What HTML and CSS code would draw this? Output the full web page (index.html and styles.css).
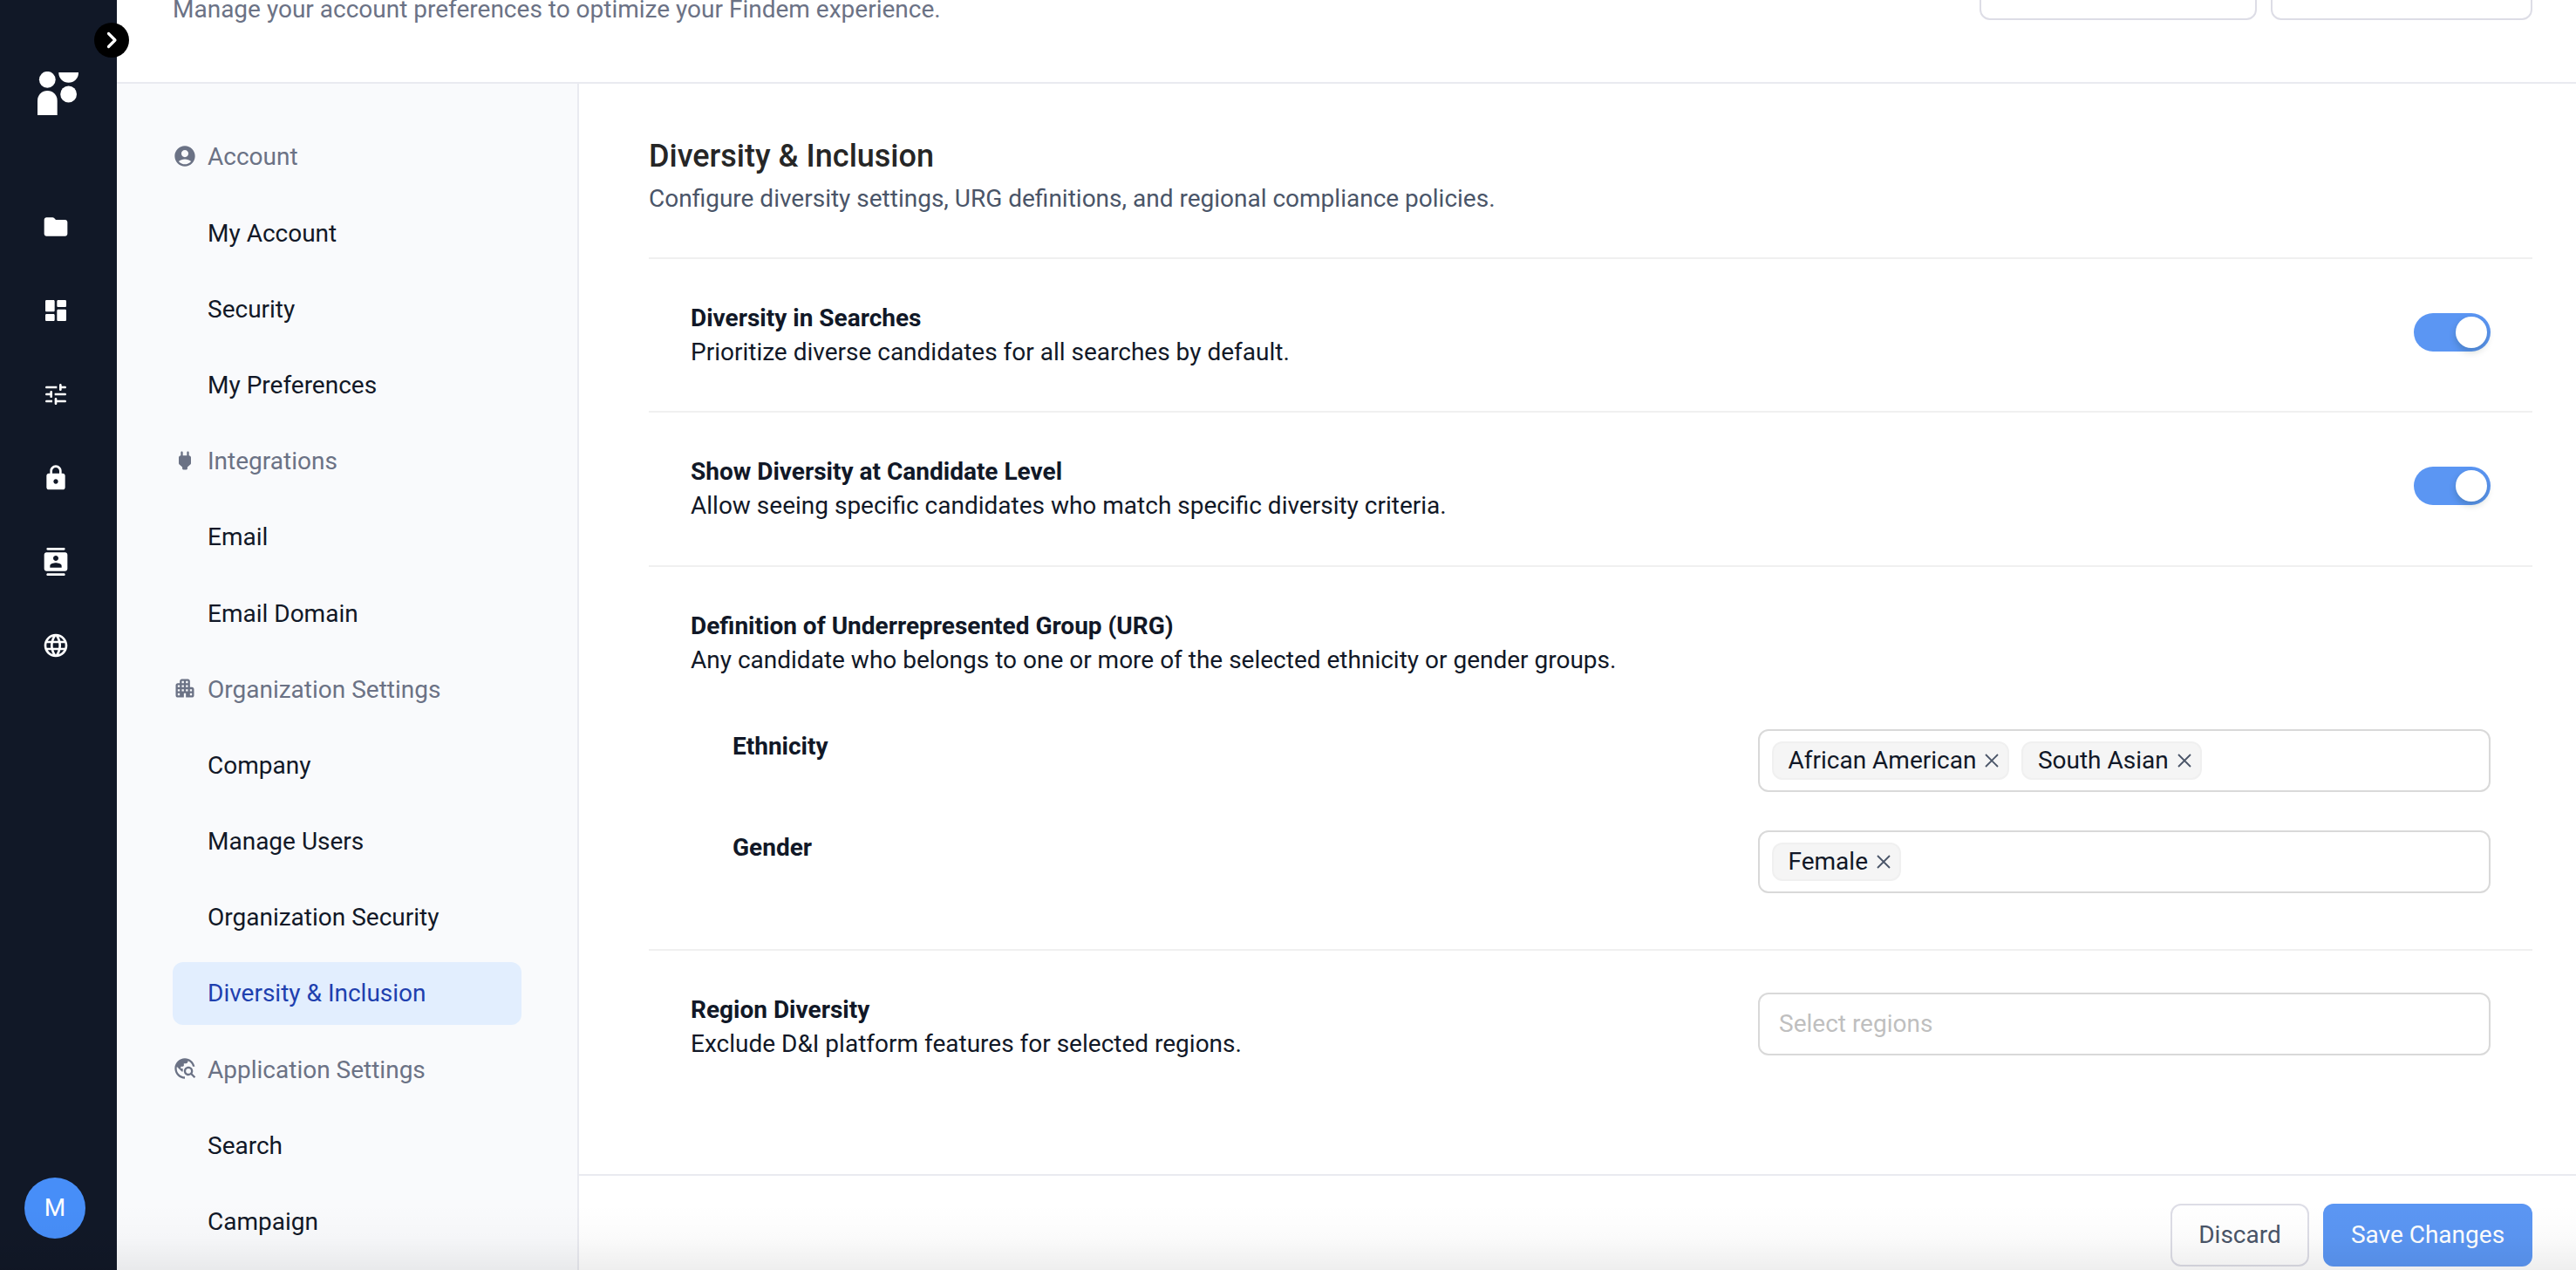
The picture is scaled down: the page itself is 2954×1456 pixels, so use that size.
FILE: index.html
```html
<!DOCTYPE html>
<html lang="en">
<head>
<meta charset="utf-8">
<title>Settings</title>
<link rel="stylesheet" href="styles.css">
</head>
<body>
<div class="app">
  <aside class="rail">
    <button class="rail-toggle" aria-label="Expand">
      <svg viewBox="0 0 20 20" width="20" height="20"><path d="M6.500 2.500L14 10l-7.500 7.500" fill="none" stroke="#fff" stroke-width="3.200" stroke-linecap="round" stroke-linejoin="round"/></svg>
    </button>
    <svg class="logo" viewBox="0 0 48 50" width="48" height="50" fill="#fff"><circle cx="11.300" cy="9.300" r="9.400"/><path d="M24.300 1h22.700v.5a11.350 11.350 0 0 1-22.700 0z"/><circle cx="35.600" cy="26" r="9.400"/><path d="M0 50V33.400a11.350 11.350 0 0 1 22.700 0V50z"/></svg>
    <nav class="rail-nav">
      <svg class="rail-icon" viewBox="0 0 24 24"><path d="M10.590 4.590C10.210 4.210 9.700 4 9.170 4H4c-1.100 0-1.990.9-1.990 2L2 18c0 1.100.9 2 2 2h16c1.100 0 2-.9 2-2V8c0-1.100-.9-2-2-2h-8l-1.410-1.410z"/></svg>
      <svg class="rail-icon" viewBox="0 0 24 24"><path d="M4 13h6c.55 0 1-.45 1-1V4c0-.55-.45-1-1-1H4c-.55 0-1 .45-1 1v8c0 .55.45 1 1 1zm0 8h6c.55 0 1-.45 1-1v-4c0-.55-.45-1-1-1H4c-.55 0-1 .45-1 1v4c0 .55.45 1 1 1zm10 0h6c.55 0 1-.45 1-1v-8c0-.55-.45-1-1-1h-6c-.55 0-1 .45-1 1v8c0 .55.45 1 1 1zM13 4v4c0 .55.45 1 1 1h6c.55 0 1-.45 1-1V4c0-.55-.45-1-1-1h-6c-.55 0-1 .45-1 1z"/></svg>
      <svg class="rail-icon" viewBox="0 0 24 24"><path d="M3 18c0 .55.45 1 1 1h5v-2H4c-.55 0-1 .45-1 1zM3 6c0 .55.45 1 1 1h9V5H4c-.55 0-1 .45-1 1zm10 14v-1h7c.55 0 1-.45 1-1s-.45-1-1-1h-7v-1c0-.55-.45-1-1-1s-1 .45-1 1v4c0 .55.45 1 1 1s1-.45 1-1zM7 10v1H4c-.55 0-1 .45-1 1s.45 1 1 1h3v1c0 .55.45 1 1 1s1-.45 1-1v-4c0-.55-.45-1-1-1s-1 .45-1 1zm14 2c0-.55-.45-1-1-1h-9v2h9c.55 0 1-.45 1-1zm-5-3c.55 0 1-.45 1-1V7h3c.55 0 1-.45 1-1s-.45-1-1-1h-3V4c0-.55-.45-1-1-1s-1 .45-1 1v4c0 .55.45 1 1 1z"/></svg>
      <svg class="rail-icon" viewBox="0 0 24 24"><path d="M18 8h-1V6c0-2.760-2.240-5-5-5S7 3.240 7 6v2H6c-1.100 0-2 .9-2 2v10c0 1.100.9 2 2 2h12c1.100 0 2-.9 2-2V10c0-1.100-.9-2-2-2zm-6 9c-1.100 0-2-.9-2-2s.9-2 2-2 2 .9 2 2-.9 2-2 2zM9 8V6c0-1.660 1.340-3 3-3s3 1.340 3 3v2H9z"/></svg>
      <svg class="rail-icon" viewBox="0 0 24 24"><path d="M20 4H4c-1.100 0-2 .9-2 2v12c0 1.100.9 2 2 2h16c1.100 0 2-.9 2-2V6c0-1.100-.9-2-2-2zm-8 2.750c1.240 0 2.250 1.010 2.250 2.250s-1.010 2.250-2.250 2.250S9.750 10.240 9.750 9 10.760 6.750 12 6.750zM17 17H7v-1.500c0-1.670 3.330-2.500 5-2.500s5 .83 5 2.500V17zM5 2h14c.55 0 1-.45 1-1s-.45-1-1-1H5c-.55 0-1 .45-1 1s.45 1 1 1zm14 20H5c-.55 0-1 .45-1 1s.45 1 1 1h14c.55 0 1-.45 1-1s-.45-1-1-1z"/></svg>
      <svg class="rail-icon" viewBox="0 0 24 24"><path d="M11.990 2C6.470 2 2 6.480 2 12s4.470 10 9.990 10C17.520 22 22 17.520 22 12S17.520 2 11.990 2zm6.930 6h-2.950c-.32-1.250-.78-2.450-1.380-3.560 1.840.63 3.370 1.910 4.330 3.560zM12 4.040c.83 1.200 1.480 2.530 1.910 3.960h-3.820c.43-1.430 1.080-2.760 1.910-3.960zM4.260 14C4.100 13.360 4 12.690 4 12s.1-1.360.26-2h3.380c-.08.66-.14 1.320-.14 2s.06 1.340.14 2H4.260zm.82 2h2.950c.32 1.250.78 2.450 1.380 3.560-1.840-.63-3.370-1.900-4.330-3.560zm2.950-8H5.080c.96-1.660 2.490-2.930 4.330-3.560C8.810 5.550 8.350 6.750 8.030 8zM12 19.960c-.83-1.200-1.480-2.530-1.910-3.960h3.820c-.43 1.430-1.080 2.760-1.910 3.960zM14.340 14H9.660c-.09-.66-.16-1.320-.16-2s.07-1.350.16-2h4.680c.09.65.16 1.320.16 2s-.07 1.340-.16 2zm.25 5.560c.6-1.110 1.060-2.310 1.380-3.560h2.950c-.96 1.650-2.490 2.930-4.330 3.560zM16.360 14c.08-.66.14-1.320.14-2s-.06-1.340-.14-2h3.380c.16.64.26 1.310.26 2s-.1 1.360-.26 2h-3.380z"/></svg>
    </nav>
    <div class="avatar">M</div>
  </aside>
  <div class="page">
    <header class="page-header">
      <p class="page-subtitle">Manage your account preferences to optimize your Findem experience.</p>
      <div class="header-actions">
        <button class="header-btn header-btn-wide"></button>
        <button class="header-btn"></button>
      </div>
    </header>
    <div class="body">
      <nav class="menu">
        <div class="menu-group"><svg class="menu-icon" viewBox="0 0 24 24"><path d="M12 2C6.480 2 2 6.480 2 12s4.480 10 10 10 10-4.480 10-10S17.520 2 12 2zm0 4c1.930 0 3.500 1.570 3.500 3.500S13.930 13 12 13s-3.500-1.570-3.500-3.500S10.070 6 12 6zm0 14c-2.030 0-4.430-.82-6.140-2.880C7.550 15.800 9.680 15 12 15s4.450.8 6.140 2.120C16.430 19.180 14.030 20 12 20z"/></svg>Account</div>
        <a class="menu-item">My Account</a>
        <a class="menu-item">Security</a>
        <a class="menu-item">My Preferences</a>
        <div class="menu-group"><svg class="menu-icon" viewBox="0 0 24 24"><path d="M16 7V4c0-.55-.45-1-1-1s-1 .45-1 1v3h-4V4c0-.55-.45-1-1-1s-1 .45-1 1v3c-1.100 0-2 .9-2 2v5.490c0 .53.21 1.040.59 1.410L9.500 18.500V20c0 .55.45 1 1 1h3c.55 0 1-.45 1-1v-1.500l2.910-2.600c.38-.37.59-.88.59-1.410V9c0-1.100-.9-2-2-2z"/></svg>Integrations</div>
        <a class="menu-item">Email</a>
        <a class="menu-item">Email Domain</a>
        <div class="menu-group"><svg class="menu-icon" viewBox="0 0 24 24"><path d="M17 11V5c0-1.100-.9-2-2-2H9c-1.100 0-2 .9-2 2v2H5c-1.100 0-2 .9-2 2v10c0 1.100.9 2 2 2h6v-4h2v4h6c1.100 0 2-.9 2-2v-6c0-1.100-.9-2-2-2h-2zM7 19H5v-2h2v2zm0-4H5v-2h2v2zm0-4H5V9h2v2zm4 4H9v-2h2v2zm0-4H9V9h2v2zm0-4H9V5h2v2zm4 8h-2v-2h2v2zm0-4h-2V9h2v2zm0-4h-2V5h2v2zm4 12h-2v-2h2v2zm0-4h-2v-2h2v2z"/></svg>Organization Settings</div>
        <a class="menu-item">Company</a>
        <a class="menu-item">Manage Users</a>
        <a class="menu-item">Organization Security</a>
        <a class="menu-item active">Diversity &amp; Inclusion</a>
        <div class="menu-group"><svg class="menu-icon" viewBox="0 0 24 24"><path d="M19.300 16.900c.4-.7.7-1.500.7-2.400 0-2.500-2-4.500-4.500-4.500S11 12 11 14.500s2 4.500 4.500 4.500c.9 0 1.700-.3 2.400-.7l3.200 3.200 1.400-1.400-3.200-3.200zm-3.800.1c-1.400 0-2.500-1.100-2.500-2.500s1.100-2.500 2.500-2.500 2.500 1.100 2.500 2.500-1.100 2.500-2.500 2.500zM12 20v2C6.480 22 2 17.520 2 12S6.480 2 12 2c4.840 0 8.870 3.440 9.800 8h-2.070c-.64-2.460-2.400-4.470-4.730-5.410V5c0 1.100-.9 2-2 2h-2v2c0 .55-.45 1-1 1H8v2h2v3H9l-4.790-4.790C4.080 10.790 4 11.380 4 12c0 4.410 3.590 8 8 8z"/></svg>Application Settings</div>
        <a class="menu-item">Search</a>
        <a class="menu-item">Campaign</a>
      </nav>
      <main class="content">
        <div class="sections">
          <div class="intro">
            <h1 class="title">Diversity &amp; Inclusion</h1>
            <p class="lead">Configure diversity settings, URG definitions, and regional compliance policies.</p>
          </div>
          <section class="setting">
            <div>
              <h2 class="label">Diversity in Searches</h2>
              <p class="text">Prioritize diverse candidates for all searches by default.</p>
            </div>
            <span class="switch"><span class="knob"></span></span>
          </section>
          <section class="setting">
            <div>
              <h2 class="label">Show Diversity at Candidate Level</h2>
              <p class="text">Allow seeing specific candidates who match specific diversity criteria.</p>
            </div>
            <span class="switch"><span class="knob"></span></span>
          </section>
          <section class="setting setting-group">
            <div>
              <h2 class="label">Definition of Underrepresented Group (URG)</h2>
              <p class="text">Any candidate who belongs to one or more of the selected ethnicity or gender groups.</p>
            </div>
            <div class="fields">
              <div class="field">
                <h3 class="label">Ethnicity</h3>
                <div class="select">
                  <span class="tag"><span class="tag-text">African American</span><svg class="close" viewBox="0 0 16 16"><path d="M1 1l14 14M15 1L1 15"/></svg></span>
                  <span class="tag"><span class="tag-text">South Asian</span><svg class="close" viewBox="0 0 16 16"><path d="M1 1l14 14M15 1L1 15"/></svg></span>
                </div>
              </div>
              <div class="field">
                <h3 class="label">Gender</h3>
                <div class="select">
                  <span class="tag"><span class="tag-text">Female</span><svg class="close" viewBox="0 0 16 16"><path d="M1 1l14 14M15 1L1 15"/></svg></span>
                </div>
              </div>
            </div>
          </section>
          <section class="setting setting-top">
            <div>
              <h2 class="label">Region Diversity</h2>
              <p class="text">Exclude D&amp;I platform features for selected regions.</p>
            </div>
            <div class="select"><span class="placeholder">Select regions</span></div>
          </section>
        </div>
        <footer class="footer">
          <button class="btn btn-plain">Discard</button>
          <button class="btn btn-primary">Save Changes</button>
        </footer>
      </main>
    </div>
  </div>
  <div class="bottom-fade"></div>
</div>
</body>
</html>
```
FILE: styles.css
```css
* { box-sizing: border-box; }
body {
  margin: 0;
  overflow: hidden;
  font-family: Roboto, "Liberation Sans", sans-serif;
  font-size: 28px;
  line-height: 39.2px;
  color: #111827;
  background: #fff;
}
h1, h2, h3, p { margin: 0; }
button { font: inherit; padding: 0; }

.app { position: relative; display: flex; height: 1456px; overflow: hidden; }

.rail {
  position: relative;
  z-index: 1;
  flex: none;
  width: 134px;
  background: #111827;
  display: flex;
  flex-direction: column;
  padding: 82px 0 36px;
}
.rail-toggle {
  position: absolute;
  top: 26px;
  left: 108px;
  width: 40px;
  height: 40px;
  border: 0;
  border-radius: 50%;
  background: #000;
  display: flex;
  align-items: center;
  justify-content: center;
}
.logo { margin-left: 43px; flex: none; }
.rail-nav { display: flex; flex-direction: column; gap: 64px; padding: 112px 0 0 48px; }
.rail-icon { width: 32px; height: 32px; fill: #fff; }
.avatar {
  width: 70px;
  height: 70px;
  margin: auto 0 0 28px;
  border-radius: 50%;
  background: #478ef8;
  color: #fff;
  display: flex;
  align-items: center;
  justify-content: center;
}

.page { flex: 1; min-width: 0; display: flex; flex-direction: column; }
.page-header {
  flex: none;
  height: 96px;
  padding: 0 50px 64px 64px;
  border-bottom: 2px solid #e9eaf0;
  display: flex;
  justify-content: space-between;
  align-items: flex-end;
}
.page-subtitle { color: #6b7285; }
.header-actions { display: flex; gap: 16px; margin-bottom: 7px; }
.header-btn {
  width: 300px;
  height: 72px;
  border: 2px solid #dddde6;
  border-radius: 12px;
  background: #fff;
}
.header-btn-wide { width: 318px; }

.body { flex: 1; min-height: 0; display: flex; }
.menu {
  flex: none;
  width: 530px;
  padding: 48.4px 64px 0;
  background: #f9fafc;
  border-right: 2px solid #e9eaf0;
  display: flex;
  flex-direction: column;
  gap: 16px;
}
.menu-group, .menu-item {
  flex: none;
  width: 400px;
  height: 71.2px;
  border-radius: 12px;
  display: flex;
  align-items: center;
}
.menu-group { color: #6b7285; gap: 12px; }
.menu-item { padding-left: 40px; }
.menu-item.active { background: #e2eefe; color: #1e40af; }
.menu-icon { width: 28px; height: 28px; margin-bottom: 2px; fill: #6b7285; }

.content { flex: 1; min-width: 0; display: flex; flex-direction: column; }
.sections { flex: 1; padding: 55px 50px 0 80px; }
.intro { height: 144px; }
.title { font-size: 36px; line-height: 56px; font-weight: 500; color: #262626; }
.lead { padding-top: 1px; color: #4a5568; }
.setting {
  border-top: 2px solid #f0f0f0;
  padding: 48px;
  display: flex;
  justify-content: space-between;
  align-items: flex-start;
}
.label { font-size: 28px; line-height: 39px; font-weight: 700; }
.text { line-height: 39.4px; }
.setting-group { flex-direction: column; align-items: stretch; gap: 60px; padding-bottom: 64px; }
.setting-top .select { flex: none; }
.fields { display: flex; flex-direction: column; gap: 44px; padding-left: 48px; }
.field { display: flex; justify-content: space-between; }

.switch {
  width: 88px;
  height: 44px;
  margin-top: 14px;
  padding: 4px;
  border-radius: 22px;
  background: #5b96f3;
  display: flex;
  justify-content: flex-end;
}
.knob {
  width: 36px;
  height: 36px;
  border-radius: 50%;
  background: #fff;
  box-shadow: 0 4px 8px rgba(0, 35, 11, 0.2);
}

.select {
  width: 840px;
  height: 72px;
  border: 2px solid #d9d9d9;
  border-radius: 12px;
  background: #fff;
  padding: 0 14px;
  display: flex;
  align-items: center;
  gap: 14px;
}
.tag {
  height: 44px;
  padding: 0 10px 0 16.5px;
  border: 2px solid #f0f0f0;
  border-radius: 12px;
  background: #f5f5f5;
  display: flex;
  align-items: center;
  gap: 10px;
}
.tag-text { padding-bottom: 2px; }
.close { width: 16px; height: 16px; fill: none; stroke: #4a5568; stroke-width: 1.8; }
.placeholder { padding: 0 0 2px 8px; color: #bfbfbf; }

.footer {
  flex: none;
  height: 110px;
  padding: 32px 50px 0;
  border-top: 2px solid #e9eaf0;
  display: flex;
  justify-content: flex-end;
  gap: 16px;
}
.btn { height: 72px; border-radius: 12px; }
.btn-plain { width: 159px; border: 2px solid #dddde6; background: #fff; color: #4a5568; }
.btn-primary { width: 240px; border: 0; background: #5b96f3; color: #fff; }

.bottom-fade {
  position: absolute;
  left: 0;
  right: 0;
  bottom: 0;
  height: 76px;
  z-index: 2;
  pointer-events: none;
  background: linear-gradient(rgba(0, 0, 0, 0), rgba(0, 0, 0, 0.015) 50%, rgba(0, 0, 0, 0.065));
}
```
